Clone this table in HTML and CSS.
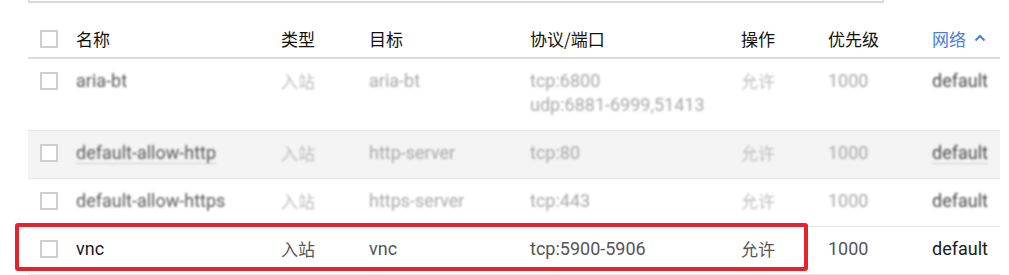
FILE: index.html
```html
<!DOCTYPE html>
<html>
<head>
<meta charset="utf-8">
<link rel="stylesheet" href="styles.css">
</head>
<body>
<div class="page">
  <div class="topbox"></div>
  <div class="table">
    <div class="row head">
      <div class="cb"><span class="box"></span></div>
      <div class="c zh">名称</div>
      <div class="c zh">类型</div>
      <div class="c zh">目标</div>
      <div class="c zh">协议/端口</div>
      <div class="c zh">操作</div>
      <div class="c zh">优先级</div>
      <div class="c zh net">网络 <svg class="chev" width="12" height="8" viewBox="0 0 12 8"><path d="M1.5 6.5 L6 2 L10.5 6.5" fill="none" stroke="#4a7ee0" stroke-width="2"/></svg></div>
    </div>
    <div class="row fade">
      <div class="cb"><span class="box"></span></div>
      <div class="c name">aria-bt</div>
      <div class="c zh light">入站</div>
      <div class="c mid">aria-bt</div>
      <div class="c mid">tcp:6800<br>udp:6881-6999,51413</div>
      <div class="c zh light">允许</div>
      <div class="c mid">1000</div>
      <div class="c dark">default</div>
    </div>
    <div class="row fade hover">
      <div class="cb"><span class="box"></span></div>
      <div class="c name"><span class="ul">default-allow-http</span></div>
      <div class="c zh light">入站</div>
      <div class="c mid">http-server</div>
      <div class="c mid">tcp:80</div>
      <div class="c zh light">允许</div>
      <div class="c mid">1000</div>
      <div class="c dark"><span class="ul">default</span></div>
    </div>
    <div class="row fade">
      <div class="cb"><span class="box"></span></div>
      <div class="c name">default-allow-https</div>
      <div class="c zh light">入站</div>
      <div class="c mid">https-server</div>
      <div class="c mid">tcp:443</div>
      <div class="c zh light">允许</div>
      <div class="c mid">1000</div>
      <div class="c dark">default</div>
    </div>
    <div class="row sel">
      <div class="cb"><span class="box"></span></div>
      <div class="c s-name">vnc</div>
      <div class="c zh s-mid">入站</div>
      <div class="c s-mid">vnc</div>
      <div class="c s-mid">tcp:5900-5906</div>
      <div class="c zh s-mid">允许</div>
      <div class="c s-mid">1000</div>
      <div class="c s-name">default</div>
      <div class="mark"></div>
    </div>
  </div>
</div>
</body>
</html>
```
FILE: styles.css
```css
* { box-sizing: border-box; }
html, body { margin: 0; padding: 0; background: #fff; }
body {
  font-family: Roboto, "Noto Sans CJK SC", sans-serif;
  font-size: 18px;
  color: #212121;
}
.page { width: 1009px; height: 275px; overflow: hidden; padding-left: 28px; }
.topbox {
  width: 856px;
  height: 3px;
  border: 2px solid #d9d9d9;
  border-top: none;
}
.table { width: 972px; }
.row {
  display: grid;
  grid-template-columns: 48px 205px 88px 161px 211px 87px 104px 68px;
  align-items: start;
  line-height: 24px;
  position: relative;
  border-bottom: 1px solid #e4e4e4;
  padding: 10px 0 13px;
}
.row.head {
  padding: 24px 0 6px;
  border-bottom: 2px solid #dcdcdc;
  color: #111;
}
.cb { padding-left: 12px; padding-top: 3px; }
.box {
  display: block;
  width: 18px;
  height: 18px;
  border: 2px solid #cfcfcf;
  background: #fff;
}
.c { white-space: nowrap; }
.zh { font-family: "Noto Sans CJK SC", sans-serif; font-size: 17px; }
.net { color: #4a7ee0; display: flex; align-items: center; gap: 8px; }
.chev { margin-top: -2px; }
.fade .c { filter: blur(1px); }
.hover { background: #f4f4f4; }
.name { color: #5a5a5a; }
.dark { color: #4a4a4a; }
.mid { color: #a8a8a8; }
.light { color: #bdbdbd; }
.ul { border-bottom: 1px solid #cfcfcf; }
.s-name { color: #1a1a1a; }
.s-mid { color: #555; }
.mark {
  position: absolute;
  left: -13px;
  top: -4px;
  width: 793px;
  height: 48px;
  border: 4px solid #e8212b;
  border-radius: 3px;
  pointer-events: none;
}
```
